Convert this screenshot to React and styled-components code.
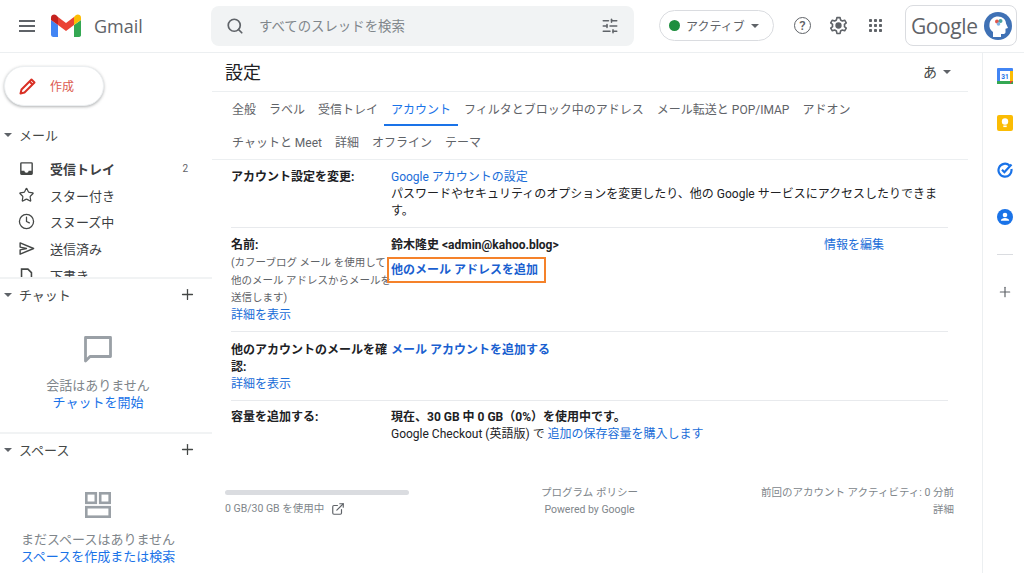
import React from "react";
import styled, { createGlobalStyle } from "styled-components";
import {
  Clock,
  ExternalLink,
  Plus,
  Search,
  SlidersHorizontal,
  Star,
} from "lucide-react";

const GlobalStyle = createGlobalStyle`
  html, body { margin: 0; padding: 0; background: #fff; }
  * { box-sizing: border-box; }
  body {
    font-family: Roboto, "Noto Sans CJK JP", sans-serif;
    color: #202124;
  }
`;

const mailItems = [
  { label: "受信トレイ", icon: "inbox", bold: true, count: 2 },
  { label: "スター付き", icon: "star" },
  { label: "スヌーズ中", icon: "clock" },
  { label: "送信済み", icon: "send" },
  { label: "下書き", icon: "draft" },
];

const tabRows = [
  ["全般", "ラベル", "受信トレイ", "アカウント", "フィルタとブロック中のアドレス", "メール転送と POP/IMAP", "アドオン"],
  ["チャットと Meet", "詳細", "オフライン", "テーマ"],
];

function MailIcon({ name }) {
  if (name === "star") return <Star size={16} strokeWidth={1.8} />;
  if (name === "clock") return <Clock size={17} strokeWidth={1.8} />;
  if (name === "send") {
    return (
      <svg width="17" height="17" viewBox="0 0 24 24" fill="none" stroke="currentColor" strokeWidth="2">
        <path d="M3 4l19 8-19 8v-6l9-2-9-2z" strokeLinejoin="round" />
      </svg>
    );
  }
  if (name === "draft") {
    return (
      <svg width="17" height="17" viewBox="0 0 24 24" fill="none" stroke="currentColor" strokeWidth="2.2">
        <path d="M5 3h9l5 5v13H5z" />
      </svg>
    );
  }
  return (
    <svg width="17" height="17" viewBox="0 0 24 24" fill="currentColor">
      <path d="M19 3H5a2 2 0 0 0-2 2v14a2 2 0 0 0 2 2h14a2 2 0 0 0 2-2V5a2 2 0 0 0-2-2zm0 12h-4a3 3 0 0 1-6 0H5V5h14z" />
    </svg>
  );
}

function GmailLogo() {
  return (
    <svg width="30" height="24" viewBox="0 0 30 24">
      <path d="M2 23h5V11L0 6v14.500A2.500 2.500 0 0 0 2 23z" fill="#4285f4" />
      <path d="M23 23h5a2 2 0 0 0 2-2.500V6l-7 5z" fill="#34a853" />
      <path d="M23 3v8l7-5V3.500C30 1 27 -.5 25 1z" fill="#fbbc04" />
      <path d="M7 11V3l8 6 8-6v8l-8 6z" fill="#ea4335" />
      <path d="M0 3.500V6l7 5V3L5 1C3 -.5 0 1 0 3.500z" fill="#c5221f" />
    </svg>
  );
}

function GearIcon() {
  return (
    <svg width="19" height="19" viewBox="0 0 24 24" fill="none" stroke="#5f6368" strokeWidth="2">
      <circle cx="12" cy="12" r="3" fill="#5f6368" />
      <path d="M10 2h4l.6 3 2.300 1.300 2.900-1 2 3.400-2.300 2a7 7 0 0 1 0 2.600l2.300 2-2 3.400-2.900-1-2.300 1.300-.6 3h-4l-.6-3-2.300-1.300-2.900 1-2-3.400 2.300-2a7 7 0 0 1 0-2.600l-2.300-2 2-3.400 2.900 1L9.400 5z" strokeLinejoin="round" />
    </svg>
  );
}

function AppsGrid() {
  const dots = [];
  for (let y = 0; y < 3; y++) {
    for (let x = 0; x < 3; x++) {
      dots.push(<rect key={x + "-" + y} x={x * 5} y={y * 5} width="3" height="3" rx="0.800" fill="#5f6368" />);
    }
  }
  return (
    <svg width="13" height="13" viewBox="0 0 13 13">
      {dots}
    </svg>
  );
}

function Avatar() {
  return (
    <svg width="28" height="28" viewBox="0 0 28 28">
      <circle cx="14" cy="14" r="14" fill="#3f71b5" />
      <path d="M9 25v-5c-3-2-4-5-3.500-8C6 7 10 4.500 14 4.500c4.500 0 8 3 8 7l2 4.500-2.500.8V20c0 1.500-1 2-2.500 2h-2v3z" fill="#fff" />
      <circle cx="13" cy="9.500" r="2" fill="#e2574c" />
      <circle cx="16.500" cy="9" r="2" fill="#4aa3a2" />
      <circle cx="14.500" cy="12" r="1.800" fill="#7fb2e5" />
    </svg>
  );
}

function CalendarIcon() {
  return (
    <svg width="16" height="16" viewBox="0 0 16 16">
      <rect width="16" height="16" rx="1" fill="#4285f4" />
      <rect x="3" y="3" width="10" height="10" fill="#fff" />
      <rect x="13" y="3" width="3" height="10" fill="#fbbc04" />
      <rect y="13" width="16" height="3" fill="#34a853" />
      <path d="M13 16l3-3h-3z" fill="#ea4335" />
      <text x="8" y="11" fontSize="6.500" fontWeight="700" textAnchor="middle" fill="#1a73e8" fontFamily="Roboto">31</text>
    </svg>
  );
}

function KeepIcon() {
  return (
    <svg width="16" height="16" viewBox="0 0 16 16">
      <rect width="16" height="16" rx="2" fill="#fbbc04" />
      <circle cx="8" cy="6.500" r="3.200" fill="#fff" />
      <rect x="6.300" y="10.500" width="3.400" height="1.600" fill="#fff" />
    </svg>
  );
}

function TasksIcon() {
  return (
    <svg width="16" height="16" viewBox="0 0 16 16" fill="none">
      <path d="M12.500 3.500A6.500 6.500 0 1 0 14.400 7" stroke="#1a73e8" strokeWidth="2.200" />
      <path d="M5 7.800l2.400 2.400L14.500 2.500" stroke="#1a73e8" strokeWidth="2.200" />
    </svg>
  );
}

function ContactsIcon() {
  return (
    <svg width="16" height="16" viewBox="0 0 16 16">
      <circle cx="8" cy="8" r="8" fill="#1a73e8" />
      <circle cx="8" cy="6" r="2.300" fill="#fff" />
      <path d="M3.800 11.800c0-1.800 2.400-2.700 4.200-2.700s4.200.9 4.200 2.700z" fill="#fff" />
    </svg>
  );
}

export default function App() {
  return (
    <>
      <GlobalStyle />
      <Page>
        <Header>
          <Brand>
            <MenuLines>
              <span />
              <span />
              <span />
            </MenuLines>
            <GmailLogo />
            <GmailWord>Gmail</GmailWord>
          </Brand>
          <SearchBar>
            <Search size={18} strokeWidth={2.300} color="#5f6368" />
            <SearchText>すべてのスレッドを検索</SearchText>
            <SlidersHorizontal size={18} color="#5f6368" />
          </SearchBar>
          <StatusPill>
            <GreenDot />
            アクティブ
            <Caret />
          </StatusPill>
          <HelpIcon>?</HelpIcon>
          <HeaderIcon>
            <GearIcon />
          </HeaderIcon>
          <HeaderIcon>
            <AppsGrid />
          </HeaderIcon>
          <AccountBox>
            <GoogleWord>Google</GoogleWord>
            <Avatar />
          </AccountBox>
        </Header>

        <Body>
          <Sidebar>
            <MailPane>
              <ComposeButton>
                <svg width="18" height="18" viewBox="0 0 18 18" fill="none" stroke="#d93025" strokeWidth="2">
                  <path d="M1.500 16.500l1-4L12.500 2.500l3 3-10 10z" strokeLinejoin="round" />
                  <path d="M10.500 4.500l3 3" />
                </svg>
                作成
              </ComposeButton>
              <SectionTitle $top={19}>
                <Caret />
                メール
              </SectionTitle>
              <MailList>
                {mailItems.map((item) => (
                  <MailRow key={item.label} $bold={item.bold}>
                    <MailIcon name={item.icon} />
                    <MailLabel>{item.label}</MailLabel>
                    {item.count && <MailCount>{item.count}</MailCount>}
                  </MailRow>
                ))}
              </MailList>
            </MailPane>

            <SidePanel $height={155}>
              <PanelHead>
                <SectionName>
                  <Caret />
                  チャット
                </SectionName>
                <Plus size={17} strokeWidth={1.800} color="#444746" />
              </PanelHead>
              <PanelEmpty $top={24}>
                <svg width="32" height="32" viewBox="0 0 32 32" fill="none" stroke="#9aa0a6" strokeWidth="2.800">
                  <path d="M3.500 3.500h25v19H8l-4.500 4.500z" strokeLinejoin="round" />
                </svg>
                <EmptyText>会話はありません</EmptyText>
                <EmptyLink>チャットを開始</EmptyLink>
              </PanelEmpty>
            </SidePanel>

            <SidePanel $height={141}>
              <PanelHead>
                <SectionName>
                  <Caret />
                  スペース
                </SectionName>
                <Plus size={17} strokeWidth={1.800} color="#444746" />
              </PanelHead>
              <PanelEmpty $top={26}>
                <svg width="28" height="28" viewBox="0 0 28 28" fill="none" stroke="#9aa0a6" strokeWidth="2.600">
                  <rect x="2.300" y="2.300" width="9.500" height="9.500" />
                  <rect x="16.200" y="2.300" width="9.500" height="9.500" />
                  <rect x="2.300" y="16.200" width="23.400" height="9.500" />
                </svg>
                <EmptyText $wide>まだスペースはありません</EmptyText>
                <EmptyLink>スペースを作成または検索</EmptyLink>
              </PanelEmpty>
            </SidePanel>
          </Sidebar>

          <Main>
            <TitleRow>
              <Title>設定</Title>
              <InputTool>
                あ
                <Caret />
              </InputTool>
            </TitleRow>
            <Tabs>
              {tabRows.map((row, i) => (
                <TabRow key={i}>
                  {row.map((tab) => (
                    <Tab key={tab} $active={tab === "アカウント"}>
                      {tab}
                    </Tab>
                  ))}
                </TabRow>
              ))}
            </Tabs>

            <Settings>
              <SettingRow $height={68} $pad={9}>
                <RowLabel>アカウント設定を変更:</RowLabel>
                <RowValue>
                  <Link>Google アカウントの設定</Link>
                  <br />
                  パスワードやセキュリティのオプションを変更したり、他の Google サービスにアクセスしたりできます。
                </RowValue>
              </SettingRow>

              <SettingRow $height={104} $pad={9}>
                <RowLabel>
                  名前:
                  <LabelNote>
                    (カフーブログ メール を使用して
                    <br />
                    他のメール アドレスからメールを
                    <br />
                    送信します)
                  </LabelNote>
                  <Link>詳細を表示</Link>
                </RowLabel>
                <RowValue>
                  <NameLine>
                    <strong>鈴木隆史 &lt;admin@kahoo.blog&gt;</strong>
                    <EditLink>情報を編集</EditLink>
                  </NameLine>
                  <AddressBox>他のメール アドレスを追加</AddressBox>
                </RowValue>
              </SettingRow>

              <SettingRow $height={69} $pad={10}>
                <RowLabel>
                  他のアカウントのメールを確認:
                  <Link $block>詳細を表示</Link>
                </RowLabel>
                <RowValue>
                  <BoldLink>メール アカウントを追加する</BoldLink>
                </RowValue>
              </SettingRow>

              <SettingRow $height={83} $pad={8} $last>
                <RowLabel>容量を追加する:</RowLabel>
                <RowValue>
                  <strong>現在、30 GB 中 0 GB（0%）を使用中です。</strong>
                  <br />
                  Google Checkout (英語版) で <Link>追加の保存容量を購入します</Link>
                </RowValue>
              </SettingRow>
            </Settings>

            <Footer>
              <FooterLeft>
                <StorageBar />
                <StorageText>
                  0 GB/30 GB を使用中
                  <ExternalLink size={14} strokeWidth={2} color="#5f6368" />
                </StorageText>
              </FooterLeft>
              <FooterCenter>
                プログラム ポリシー
                <br />
                Powered by Google
              </FooterCenter>
              <FooterRight>
                前回のアカウント アクティビティ: 0 分前
                <br />
                詳細
              </FooterRight>
            </Footer>
          </Main>

          <Rail>
            <RailIcon>
              <CalendarIcon />
            </RailIcon>
            <RailIcon>
              <KeepIcon />
            </RailIcon>
            <RailIcon>
              <TasksIcon />
            </RailIcon>
            <RailIcon>
              <ContactsIcon />
            </RailIcon>
            <RailDivider />
            <Plus size={16} strokeWidth={1.800} color="#5f6368" />
          </Rail>
        </Body>
      </Page>
    </>
  );
}

const Page = styled.div`
  width: 1024px;
  height: 573px;
  overflow: hidden;
  display: flex;
  flex-direction: column;
`;

const Header = styled.header`
  height: 53px;
  flex: none;
  display: flex;
  align-items: center;
  border-bottom: 1px solid #eceff1;
  padding-bottom: 1px;
`;

const Brand = styled.div`
  width: 211px;
  flex: none;
  display: flex;
  align-items: center;
  padding-left: 19px;
`;

const MenuLines = styled.div`
  width: 16px;
  height: 12px;
  margin-right: 16px;
  display: flex;
  flex-direction: column;
  justify-content: space-between;

  span {
    height: 2px;
    background: #5f6368;
  }
`;

const GmailWord = styled.span`
  margin-left: 13px;
  font: 400 18px "Open Sans", sans-serif;
  color: #5f6368;
`;

const SearchBar = styled.div`
  width: 423px;
  height: 40px;
  flex: none;
  display: flex;
  align-items: center;
  padding: 0 15px;
  background: #f1f3f4;
  border-radius: 8px;
`;

const SearchText = styled.span`
  flex: 1;
  margin: 0 0 2px 15px;
  font-size: 13.400px;
  color: #80868b;
`;

const StatusPill = styled.div`
  width: 115px;
  height: 31px;
  margin-left: 25px;
  flex: none;
  display: flex;
  align-items: center;
  padding-left: 9px;
  border: 1px solid #dadce0;
  border-radius: 16px;
  font-size: 12px;
  color: #5f6368;
`;

const GreenDot = styled.span`
  width: 11px;
  height: 11px;
  margin-right: 6px;
  border-radius: 50%;
  background: #1e8e3e;
`;

const Caret = styled.span`
  display: inline-block;
  width: 0;
  height: 0;
  margin-left: 6px;
  border-left: 4.500px solid transparent;
  border-right: 4.500px solid transparent;
  border-top: 4.500px solid #5f6368;
`;

const HelpIcon = styled.div`
  width: 17px;
  height: 17px;
  margin-left: 20px;
  flex: none;
  display: flex;
  align-items: center;
  justify-content: center;
  border: 1.800px solid #5f6368;
  border-radius: 50%;
  font-size: 13px;
  font-weight: 500;
  color: #5f6368;
`;

const HeaderIcon = styled.div`
  width: 20px;
  margin-left: 17px;
  flex: none;
  display: flex;
  justify-content: center;
`;

const AccountBox = styled.div`
  width: 112px;
  height: 41px;
  margin-left: 20px;
  flex: none;
  display: flex;
  align-items: center;
  justify-content: space-between;
  padding: 0 4px 0 5px;
  border: 1px solid #dadce0;
  border-radius: 8px;
`;

const GoogleWord = styled.span`
  font: 400 21px "Open Sans", sans-serif;
  letter-spacing: -0.4px;
  color: #5f6368;
`;

const Body = styled.div`
  flex: 1;
  min-height: 0;
  display: flex;
`;

const Sidebar = styled.aside`
  width: 212px;
  flex: none;
  display: flex;
  flex-direction: column;
`;

const MailPane = styled.div`
  height: 224px;
  flex: none;
  overflow: hidden;
  padding-top: 13px;
`;

const ComposeButton = styled.button`
  width: 100px;
  height: 40px;
  margin-left: 4px;
  display: flex;
  align-items: center;
  gap: 13px;
  padding: 0 0 1px 14px;
  background: #fff;
  border: 1px solid #eceff1;
  border-radius: 20px;
  box-shadow: 0 1px 3px rgba(60, 64, 67, 0.4);
  font-family: inherit;
  font-size: 12px;
  color: #dc5a50;
`;

const SectionTitle = styled.div`
  margin-top: ${(p) => p.$top}px;
  padding-left: 4px;
  display: flex;
  align-items: center;
  font-size: 13px;
  color: #444746;

  ${Caret} {
    margin: 0 7px 0 0;
  }
`;

const SectionName = styled(SectionTitle)`
  margin-top: 0;
`;

const MailList = styled.div`
  margin-top: 11px;
`;

const MailRow = styled.div`
  height: 26.700px;
  display: flex;
  align-items: center;
  padding-left: 18px;
  font-size: 13px;
  font-weight: ${(p) => (p.$bold ? 700 : 400)};
  color: #3c4043;

  svg {
    flex: none;
    width: 17px;
    color: #444746;
  }
`;

const MailLabel = styled.span`
  flex: 1;
  margin-left: 15px;
`;

const MailCount = styled.span`
  margin-right: 24px;
  font-size: 10px;
  font-weight: 400;
  color: #5f6368;
`;

const SidePanel = styled.section`
  height: ${(p) => p.$height}px;
  flex: none;
  border-top: 2px solid #f1f3f4;
`;

const PanelHead = styled.div`
  height: 31px;
  display: flex;
  align-items: center;
  justify-content: space-between;
  padding-right: 16px;
`;

const PanelEmpty = styled.div`
  margin-top: ${(p) => p.$top}px;
  display: flex;
  flex-direction: column;
  align-items: center;
  padding-right: 16px;
  font-size: 13px;
`;

const EmptyText = styled.div`
  margin-top: ${(p) => (p.$wide ? 12 : 11)}px;
  line-height: 17px;
  color: #80868b;
`;

const EmptyLink = styled.div`
  line-height: 17px;
  color: #1a73e8;
`;

const Main = styled.main`
  width: 770px;
  flex: none;
`;

const TitleRow = styled.div`
  width: 756px;
  height: 39px;
  display: flex;
  align-items: center;
  justify-content: space-between;
  padding: 0 17px 2px 13px;
  border-bottom: 1px solid #eceff1;
`;

const Title = styled.h1`
  margin: 0;
  font-size: 18px;
  font-weight: 400;
  color: #202124;
`;

const InputTool = styled.div`
  font-size: 14px;
  color: #444746;

  ${Caret} {
    margin-left: 6px;
    vertical-align: 3px;
  }
`;

const Tabs = styled.nav`
  width: 756px;
  height: 68px;
  padding-left: 13px;
  border-bottom: 1px solid #eceff1;
`;

const TabRow = styled.div`
  height: 33px;
  display: flex;
`;

const Tab = styled.div`
  height: 34px;
  padding: 9px 7px 0;
  margin-right: -1px;
  font-size: 12px;
  line-height: 18px;
  white-space: nowrap;
  color: ${(p) => (p.$active ? "#1a73e8" : "#5f6368")};
  border-bottom: ${(p) => (p.$active ? "2px solid #1a73e8" : "0")};
`;

const Settings = styled.div`
  width: 736px;
  padding-left: 19px;
  font-size: 12px;
  line-height: 17px;
`;

const SettingRow = styled.div`
  height: ${(p) => p.$height}px;
  display: grid;
  grid-template-columns: 160px 1fr;
  padding-top: ${(p) => p.$pad}px;
  border-bottom: ${(p) => (p.$last ? "0" : "1px solid #e8eaed")};
`;

const RowLabel = styled.div`
  font-weight: 700;
  color: #202124;
`;

const RowValue = styled.div`
  font-weight: 400;
  color: #202124;
`;

const LabelNote = styled.div`
  font-size: 10.500px;
  line-height: 17.700px;
  font-weight: 400;
  white-space: nowrap;
  color: #5f6368;
`;

const Link = styled.span`
  display: ${(p) => (p.$block ? "block" : "inline")};
  font-weight: 400;
  color: #1a6dd8;
`;

const BoldLink = styled.span`
  font-weight: 700;
  color: #1a5fd0;
`;

const NameLine = styled.div`
  display: flex;
  justify-content: space-between;
  padding-right: 64px;
`;

const EditLink = styled.span`
  color: #1a6dd8;
`;

const AddressBox = styled.div`
  width: 159px;
  height: 26px;
  margin: 3px 0 0 -4px;
  padding-left: 2px;
  border: 2px solid #f5822a;
  font-weight: 700;
  line-height: 22px;
  white-space: nowrap;
  color: #1a5fd0;
`;

const Footer = styled.footer`
  width: 742px;
  padding-left: 13px;
  display: grid;
  grid-template-columns: 1fr 1fr 1fr;
  font-size: 10.500px;
  line-height: 17px;
  color: #80868b;
`;

const FooterLeft = styled.div``;

const StorageBar = styled.div`
  width: 184px;
  height: 5px;
  margin-top: 6px;
  border-radius: 3px;
  background: #dadce0;
`;

const StorageText = styled.div`
  margin-top: 5px;
  display: flex;
  align-items: center;
  gap: 7px;
`;

const FooterCenter = styled.div`
  text-align: center;
`;

const FooterRight = styled.div`
  text-align: right;
`;

const Rail = styled.aside`
  flex: 1;
  display: flex;
  flex-direction: column;
  align-items: center;
  border-left: 1px solid #eceff1;
  padding: 15px 0 0 3px;
`;

const RailIcon = styled.div`
  height: 16px;
  margin-bottom: 31px;
`;

const RailDivider = styled.div`
  width: 16px;
  height: 1px;
  margin: -2px 0 29px;
  background: #dadce0;
`;
